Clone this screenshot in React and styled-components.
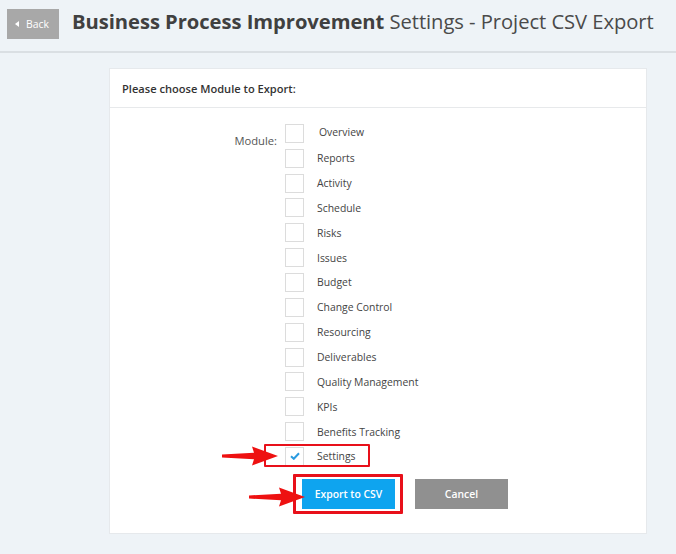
import styled, { createGlobalStyle } from 'styled-components';

const GlobalStyle = createGlobalStyle`
  html, body {
    margin: 0;
    padding: 0;
    background: #eef3f7;
    font-family: "Open Sans", "Liberation Sans", sans-serif;
  }
`;

const Page = styled.div`
  width: 676px;
  min-height: 554px;
  background: #eef3f7;
`;

const Header = styled.header`
  display: flex;
  align-items: flex-start;
  gap: 14px;
  height: 53px;
  padding: 9px 7px 0;
  border-bottom: 2px solid #dadfe3;
  box-sizing: border-box;
`;

const BackButton = styled.button`
  display: flex;
  align-items: center;
  gap: 7px;
  width: 52px;
  height: 30px;
  padding: 0 0 0 8px;
  border: none;
  background: #a8a8a8;
  color: #fff;
  font-family: inherit;
  font-size: 10.4px;
  cursor: pointer;
`;

const Title = styled.h1`
  margin: 0 0 0 -1px;
  font-size: 20.2px;
  font-weight: 400;
  color: #4a4a4a;
  line-height: 24px;
  letter-spacing: -0.05px;
  white-space: nowrap;

  & strong {
    font-weight: 700;
    color: #404040;
  }
`;

const Content = styled.main`
  padding: 15px 0 20px 109px;
`;

const Panel = styled.section`
  width: 538px;
  background: #fff;
  border: 1px solid #e6e9ec;
  box-sizing: border-box;
`;

const PanelHeader = styled.div`
  height: 38px;
  display: flex;
  align-items: center;
  padding: 0 12px;
  border-bottom: 1px solid #e7e9eb;
  font-size: 11.1px;
  font-weight: 600;
  color: #333;
`;

const PanelBody = styled.div`
  padding: 13px 0 24px;
`;

const FieldRow = styled.div`
  display: grid;
  grid-template-columns: 167px 1fr;
  column-gap: 8px;
`;

const FieldLabel = styled.label`
  text-align: right;
  font-size: 11.2px;
  color: #555;
  padding-top: 12px;
`;

const OptionList = styled.div`
  display: flex;
  flex-direction: column;
`;

const OptionRow = styled.div`
  position: relative;
  display: flex;
  align-items: center;
  gap: 13px;
  height: 24.85px;
  font-size: 10.4px;
  color: #444;
`;

const Box = styled.span`
  width: 19px;
  height: 19px;
  box-sizing: border-box;
  border: 1px solid #dcdcdc;
  background: #fff;
  display: flex;
  align-items: center;
  justify-content: center;
  flex: 0 0 auto;
`;

const OptionText = styled.span`
  margin-left: ${(p) => (p.$nudge ? '2px' : '0')};
  margin-top: ${(p) => (p.$nudge ? '-2px' : '0')};
`;

const Highlight = styled.span`
  position: absolute;
  box-sizing: border-box;
  border: ${(p) => p.$w || 2}px solid #e8101a;
  border-radius: 1px;
  pointer-events: none;
`;

const Arrow = styled.svg`
  position: absolute;
  overflow: visible;
`;

const Actions = styled.div`
  position: relative;
  display: flex;
  gap: 20px;
  margin: 10px 0 0 192px;
`;

const Button = styled.button`
  width: 93px;
  height: 30px;
  border: none;
  background: ${(p) => (p.$primary ? '#0ea4ef' : '#909090')};
  color: #fff;
  font-family: inherit;
  font-size: 10.4px;
  font-weight: 600;
  cursor: pointer;
`;

const modules = [
  'Overview',
  'Reports',
  'Activity',
  'Schedule',
  'Risks',
  'Issues',
  'Budget',
  'Change Control',
  'Resourcing',
  'Deliverables',
  'Quality Management',
  'KPIs',
  'Benefits Tracking',
  'Settings',
];

function RedArrow({ style }) {
  return (
    <Arrow width="56" height="20" viewBox="0 0 56 20" style={style}>
      <path
        d="M0 8.4 L32 6.8 L30 0.5 L56 10 L30 19.5 L32 13.2 L0 11.6 Z"
        fill="#ee1111"
      />
    </Arrow>
  );
}

export default function App() {
  return (
    <Page>
      <GlobalStyle />
      <Header>
        <BackButton>
          <svg width="4" height="6" viewBox="0 0 4 6">
            <path d="M4 0 L0 3 L4 6 Z" fill="#fff" />
          </svg>
          Back
        </BackButton>
        <Title>
          <strong>Business Process Improvement</strong> Settings - Project CSV Export
        </Title>
      </Header>
      <Content>
        <Panel>
          <PanelHeader>Please choose Module to Export:</PanelHeader>
          <PanelBody>
            <FieldRow>
              <FieldLabel>Module:</FieldLabel>
              <OptionList>
                {modules.map((m, i) => {
                  const checked = m === 'Settings';
                  return (
                    <OptionRow key={m}>
                      <Box>
                        {checked && (
                          <svg width="10" height="8" viewBox="0 0 10 8">
                            <path
                              d="M1 4.2 L3.8 6.8 L9 1.2"
                              fill="none"
                              stroke="#2a9be0"
                              strokeWidth="2"
                            />
                          </svg>
                        )}
                      </Box>
                      <OptionText $nudge={i === 0}>{m}</OptionText>
                      {checked && (
                        <>
                          <Highlight
                            style={{ left: -21, top: 0, width: 106, height: 23 }}
                          />
                          <RedArrow style={{ left: -63, top: 2 }} />
                        </>
                      )}
                    </OptionRow>
                  );
                })}
              </OptionList>
            </FieldRow>
            <Actions>
              <Button $primary>Export to CSV</Button>
              <Button>Cancel</Button>
              <Highlight
                $w={3}
                style={{ left: -9, top: -5, width: 110, height: 40 }}
              />
              <RedArrow style={{ left: -53, top: 8 }} />
            </Actions>
          </PanelBody>
        </Panel>
      </Content>
    </Page>
  );
}
